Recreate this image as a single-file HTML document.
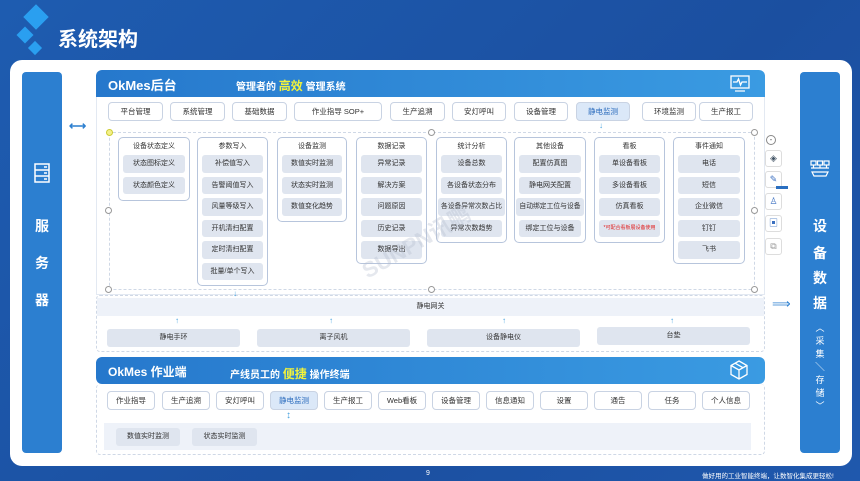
<!DOCTYPE html>
<html><head><meta charset="utf-8"><style>
*{margin:0;padding:0;box-sizing:border-box}
body{width:860px;height:481px;overflow:hidden;background:linear-gradient(135deg,#1e5cb0,#1b4fa0 60%,#1f58ad);font-family:"Liberation Sans","Noto Sans CJK SC",sans-serif;position:relative}
.a{position:absolute}
.panel{left:10px;top:60px;width:842px;height:406px;background:#fff;border-radius:12px}
.side{background:#2c7fd0;border-radius:4px;color:#fff;font-weight:bold;text-align:center}
.hdr{background:linear-gradient(90deg,#2678cc,#3a9be2);border-radius:6px 6px 0 0;color:#fff;font-weight:bold}
.tab{height:19px;border:1px solid #c9d3e3;border-radius:4px;background:#fff;font-size:7.5px;color:#333;text-align:center;line-height:17px}
.tab.on{background:#dbe8f8;color:#2a6bbd}
.col{border:1px solid #b7c5dc;border-radius:5px;background:#fff;font-size:7px;color:#333;text-align:center}
.col .t{height:17px;line-height:17px}
.col .i{margin:0 4px 4px;height:17.5px;line-height:17.5px;background:#dfe5ef;border-radius:3px;white-space:nowrap;font-size:7px;color:#333}
.dash{border:1px dashed #cfd8e6;border-radius:4px}
.dev{height:18px;background:#dfe5ef;border-radius:3px;font-size:7px;color:#333;text-align:center;line-height:18px}
.arr{color:#4aa3df;font-size:8px}
.dot{width:7px;height:7px;border:1px solid #999;border-radius:50%;background:#fff}
</style></head><body>
<!-- logo -->
<div class="a" style="left:27px;top:8px;width:18px;height:18px;background:#2a9ff0;transform:rotate(45deg)"></div>
<div class="a" style="left:19px;top:29px;width:12px;height:12px;background:#2a9ff0;transform:rotate(45deg)"></div>
<div class="a" style="left:30px;top:43px;width:10px;height:10px;background:#2a9ff0;transform:rotate(45deg)"></div>
<div class="a" style="left:58px;top:23px;color:#fff;font-size:20px;font-weight:bold">系统架构</div>

<div class="a panel"></div>
<!-- left bar -->
<div class="a side" style="left:22px;top:72px;width:40px;height:381px">
 <svg class="a" style="left:12px;top:91px" width="16" height="20" viewBox="0 0 16 20" fill="none" stroke="#fff" stroke-width="1.5"><rect x="1" y="1" width="14" height="18"/><line x1="1" y1="7" x2="15" y2="7"/><line x1="1" y1="13" x2="15" y2="13"/><line x1="10" y1="4" x2="13" y2="4"/><line x1="10" y1="10" x2="13" y2="10"/><line x1="10" y1="16" x2="13" y2="16"/></svg>
 <div class="a" style="left:0;width:40px;top:144px;font-size:14px">服</div>
 <div class="a" style="left:0;width:40px;top:181px;font-size:14px">务</div>
 <div class="a" style="left:0;width:40px;top:218px;font-size:14px">器</div>
</div>
<div class="a" style="left:69px;top:119px;color:#2c7fd0;font-size:12px;font-weight:bold">⟷</div>
<!-- right bar -->
<div class="a side" style="left:800px;top:72px;width:40px;height:381px">
 <svg class="a" style="left:10px;top:88px" width="20" height="18" viewBox="0 0 20 18" fill="none" stroke="#fff" stroke-width="1.2"><rect x="1" y="1" width="5" height="4"/><rect x="7.5" y="1" width="5" height="4"/><rect x="14" y="1" width="5" height="4"/><path d="M3.5 5v3M10 5v3M16.5 5v3M1 8h18M2 12h16l-2 4H4z"/></svg>
 <div class="a" style="left:0;width:40px;top:144px;font-size:14px">设</div>
 <div class="a" style="left:0;width:40px;top:171px;font-size:14px">备</div>
 <div class="a" style="left:0;width:40px;top:196px;font-size:14px">数</div>
 <div class="a" style="left:0;width:40px;top:221px;font-size:14px">据</div>
 <div class="a" style="left:0;width:40px;top:250px;font-size:9px;font-weight:normal;line-height:13px">︿<br>采<br>集<br>╲<br>存<br>储<br>﹀</div>
</div>
<div class="a" style="left:772px;top:296px;color:#2c7fd0;font-size:13px">⟹</div>
<!-- tool icons -->
<div class="a" style="left:766px;top:135px;width:10px;height:10px;border:1px solid #888;border-radius:50%;font-size:8px;line-height:7px;text-align:center;color:#555">-</div>
<div class="a" style="left:765px;top:150px;width:17px;height:17px;border:1px solid #ddd;border-radius:3px;color:#456;font-size:9px;text-align:center;line-height:15px">◈</div>
<div class="a" style="left:765px;top:171px;width:17px;height:17px;border:1px solid #ddd;border-radius:3px;color:#3a6fc0;font-size:9px;text-align:center;line-height:15px">✎</div>
<div class="a" style="left:776px;top:186px;width:12px;height:3px;background:#2a6fc0"></div>
<div class="a" style="left:765px;top:193px;width:17px;height:17px;border:1px solid #ddd;border-radius:3px;color:#3a6fc0;font-size:9px;text-align:center;line-height:15px">♙</div>
<div class="a" style="left:765px;top:215px;width:17px;height:17px;border:1px solid #ddd;border-radius:3px;color:#3a6fc0;font-size:9px;text-align:center;line-height:15px">▣</div>
<div class="a" style="left:765px;top:238px;width:17px;height:17px;border:1px solid #ddd;border-radius:3px;color:#999;font-size:9px;text-align:center;line-height:15px">⧉</div>

<!-- top header -->
<div class="a hdr" style="left:96px;top:70px;width:669px;height:27px">
 <span class="a" style="left:12px;top:5px;font-size:13px">OkMes后台</span>
 <span class="a" style="left:140px;top:7px;font-size:10px">管理者的 <span style="color:#f3f33a;font-size:12px">高效</span> 管理系统</span>
 <svg class="a" style="left:634px;top:5px" width="20" height="17" viewBox="0 0 20 17" fill="none" stroke="#fff" stroke-width="1.3"><rect x="1" y="1" width="18" height="12"/><path d="M3 7h4l1.5-3 2 6 1.5-3h5M5 16h10"/></svg>
</div>
<div class="a" style="left:96px;top:97px;width:669px;height:198px;background:#fff;border:1px solid #e3e9f2;border-top:none"></div>
<div class="a tab" style="left:108px;top:102px;width:55px">平台管理</div>
<div class="a tab" style="left:170px;top:102px;width:55px">系统管理</div>
<div class="a tab" style="left:232px;top:102px;width:55px">基础数据</div>
<div class="a tab" style="left:294px;top:102px;width:88px">作业指导 SOP+</div>
<div class="a tab" style="left:390px;top:102px;width:55px">生产追溯</div>
<div class="a tab" style="left:452px;top:102px;width:54px">安灯呼叫</div>
<div class="a tab" style="left:514px;top:102px;width:54px">设备管理</div>
<div class="a tab on" style="left:576px;top:102px;width:54px">静电监测</div>
<div class="a tab" style="left:642px;top:102px;width:54px">环境监测</div>
<div class="a tab" style="left:699px;top:102px;width:54px">生产报工</div>
<div class="a arr" style="left:599px;top:121px">↓</div>
<div class="a dash" style="left:109px;top:132px;width:646px;height:158px"></div>
<div class="a dot" style="left:106px;top:129px;background:#f4f08a;border-color:#cc3"></div>
<div class="a dot" style="left:105px;top:207px"></div><div class="a dot" style="left:105px;top:286px"></div>
<div class="a dot" style="left:428px;top:129px"></div><div class="a dot" style="left:428px;top:286px"></div>
<div class="a dot" style="left:751px;top:129px"></div><div class="a dot" style="left:751px;top:207px"></div><div class="a dot" style="left:751px;top:286px"></div>

<div class="a col" style="left:118px;top:137px;width:72px;height:64px"><div class="t">设备状态定义</div><div class="i">状态图标定义</div><div class="i">状态颜色定义</div></div>
<div class="a col" style="left:197px;top:137px;width:71px;height:149px"><div class="t">参数写入</div><div class="i">补偿值写入</div><div class="i">告警阈值写入</div><div class="i">风量等级写入</div><div class="i">开机清扫配置</div><div class="i">定时清扫配置</div><div class="i">批量/单个写入</div></div>
<div class="a col" style="left:277px;top:137px;width:70px;height:85px"><div class="t">设备监测</div><div class="i">数值实时监测</div><div class="i">状态实时监测</div><div class="i">数值变化趋势</div></div>
<div class="a col" style="left:356px;top:137px;width:71px;height:127px"><div class="t">数据记录</div><div class="i">异常记录</div><div class="i">解决方案</div><div class="i">问题原因</div><div class="i">历史记录</div><div class="i">数据导出</div></div>
<div class="a col" style="left:436px;top:137px;width:71px;height:106px"><div class="t">统计分析</div><div class="i">设备总数</div><div class="i">各设备状态分布</div><div class="i" style="margin:0 1px 4px;font-size:6.8px">各设备异常次数占比</div><div class="i">异常次数趋势</div></div>
<div class="a col" style="left:514px;top:137px;width:72px;height:106px"><div class="t">其他设备</div><div class="i">配置仿真图</div><div class="i">静电网关配置</div><div class="i" style="margin:0 1px 4px;font-size:6.8px">自动绑定工位与设备</div><div class="i">绑定工位与设备</div></div>
<div class="a col" style="left:594px;top:137px;width:71px;height:106px"><div class="t">看板</div><div class="i">单设备看板</div><div class="i">多设备看板</div><div class="i">仿真看板</div><div class="i" style="color:#e02020;font-size:5px">*可配合看板展设备使用</div></div>
<div class="a col" style="left:673px;top:137px;width:72px;height:127px"><div class="t">事件通知</div><div class="i">电话</div><div class="i">短信</div><div class="i">企业微信</div><div class="i">钉钉</div><div class="i">飞书</div></div>
<div class="a" style="left:355px;top:225px;font-size:22px;font-weight:bold;color:rgba(180,190,205,.35);transform:rotate(-30deg)">SUNPN讯鹏</div>

<!-- gateway -->
<div class="a dash" style="left:96px;top:295px;width:669px;height:57px"></div>
<div class="a arr" style="left:233px;top:289px">↓</div>
<div class="a" style="left:97px;top:298px;width:667px;height:18px;background:#eef2f9;font-size:7px;text-align:center;line-height:18px;color:#333">静电网关</div>
<div class="a arr" style="left:175px;top:316px">↑</div><div class="a arr" style="left:329px;top:316px">↑</div><div class="a arr" style="left:502px;top:316px">↑</div><div class="a arr" style="left:670px;top:316px">↑</div>
<div class="a dev" style="left:107px;top:329px;width:133px">静电手环</div>
<div class="a dev" style="left:257px;top:329px;width:153px">离子风机</div>
<div class="a dev" style="left:427px;top:329px;width:153px">设备静电仪</div>
<div class="a dev" style="left:597px;top:327px;width:153px">台垫</div>

<!-- lower header -->
<div class="a hdr" style="left:96px;top:357px;width:669px;height:27px;border-radius:6px">
 <span class="a" style="left:12px;top:6px;font-size:12px">OkMes 作业端</span>
 <span class="a" style="left:134px;top:8px;font-size:10px">产线员工的 <span style="color:#f3f33a;font-size:12px">便捷</span> 操作终端</span>
 <svg class="a" style="left:634px;top:3px" width="18" height="20" viewBox="0 0 18 20" fill="none" stroke="#fff" stroke-width="1.3"><path d="M9 1l8 4.5v9L9 19 1 14.5v-9zM1 5.5L9 10l8-4.5M9 10v9M5 3.2l8 4.5"/></svg>
</div>
<div class="a dash" style="left:96px;top:384px;width:669px;height:71px;border-top:none"></div>
<div class="a tab" style="left:107px;top:391px;width:48px">作业指导</div>
<div class="a tab" style="left:162px;top:391px;width:48px">生产追溯</div>
<div class="a tab" style="left:216px;top:391px;width:48px">安灯呼叫</div>
<div class="a tab on" style="left:270px;top:391px;width:48px">静电监测</div>
<div class="a tab" style="left:324px;top:391px;width:48px">生产报工</div>
<div class="a tab" style="left:378px;top:391px;width:48px">Web看板</div>
<div class="a tab" style="left:432px;top:391px;width:48px">设备管理</div>
<div class="a tab" style="left:486px;top:391px;width:48px">信息通知</div>
<div class="a tab" style="left:540px;top:391px;width:48px">设置</div>
<div class="a tab" style="left:594px;top:391px;width:48px">通告</div>
<div class="a tab" style="left:648px;top:391px;width:48px">任务</div>
<div class="a tab" style="left:702px;top:391px;width:48px">个人信息</div>
<div class="a arr" style="left:286px;top:410px;font-size:10px">↕</div>
<div class="a" style="left:104px;top:423px;width:647px;height:27px;background:#eef2f9"></div>
<div class="a dev" style="left:116px;top:428px;width:64px">数值实时监测</div>
<div class="a dev" style="left:192px;top:428px;width:65px">状态实时监测</div>

<!-- footer -->
<div class="a" style="left:426px;top:470px;color:#fff;font-size:7px">9</div>
<div class="a" style="left:702px;top:470px;color:#fff;font-size:6.5px;white-space:nowrap">做好用的工业智能终端，让数智化集成更轻松!</div>
</body></html>
